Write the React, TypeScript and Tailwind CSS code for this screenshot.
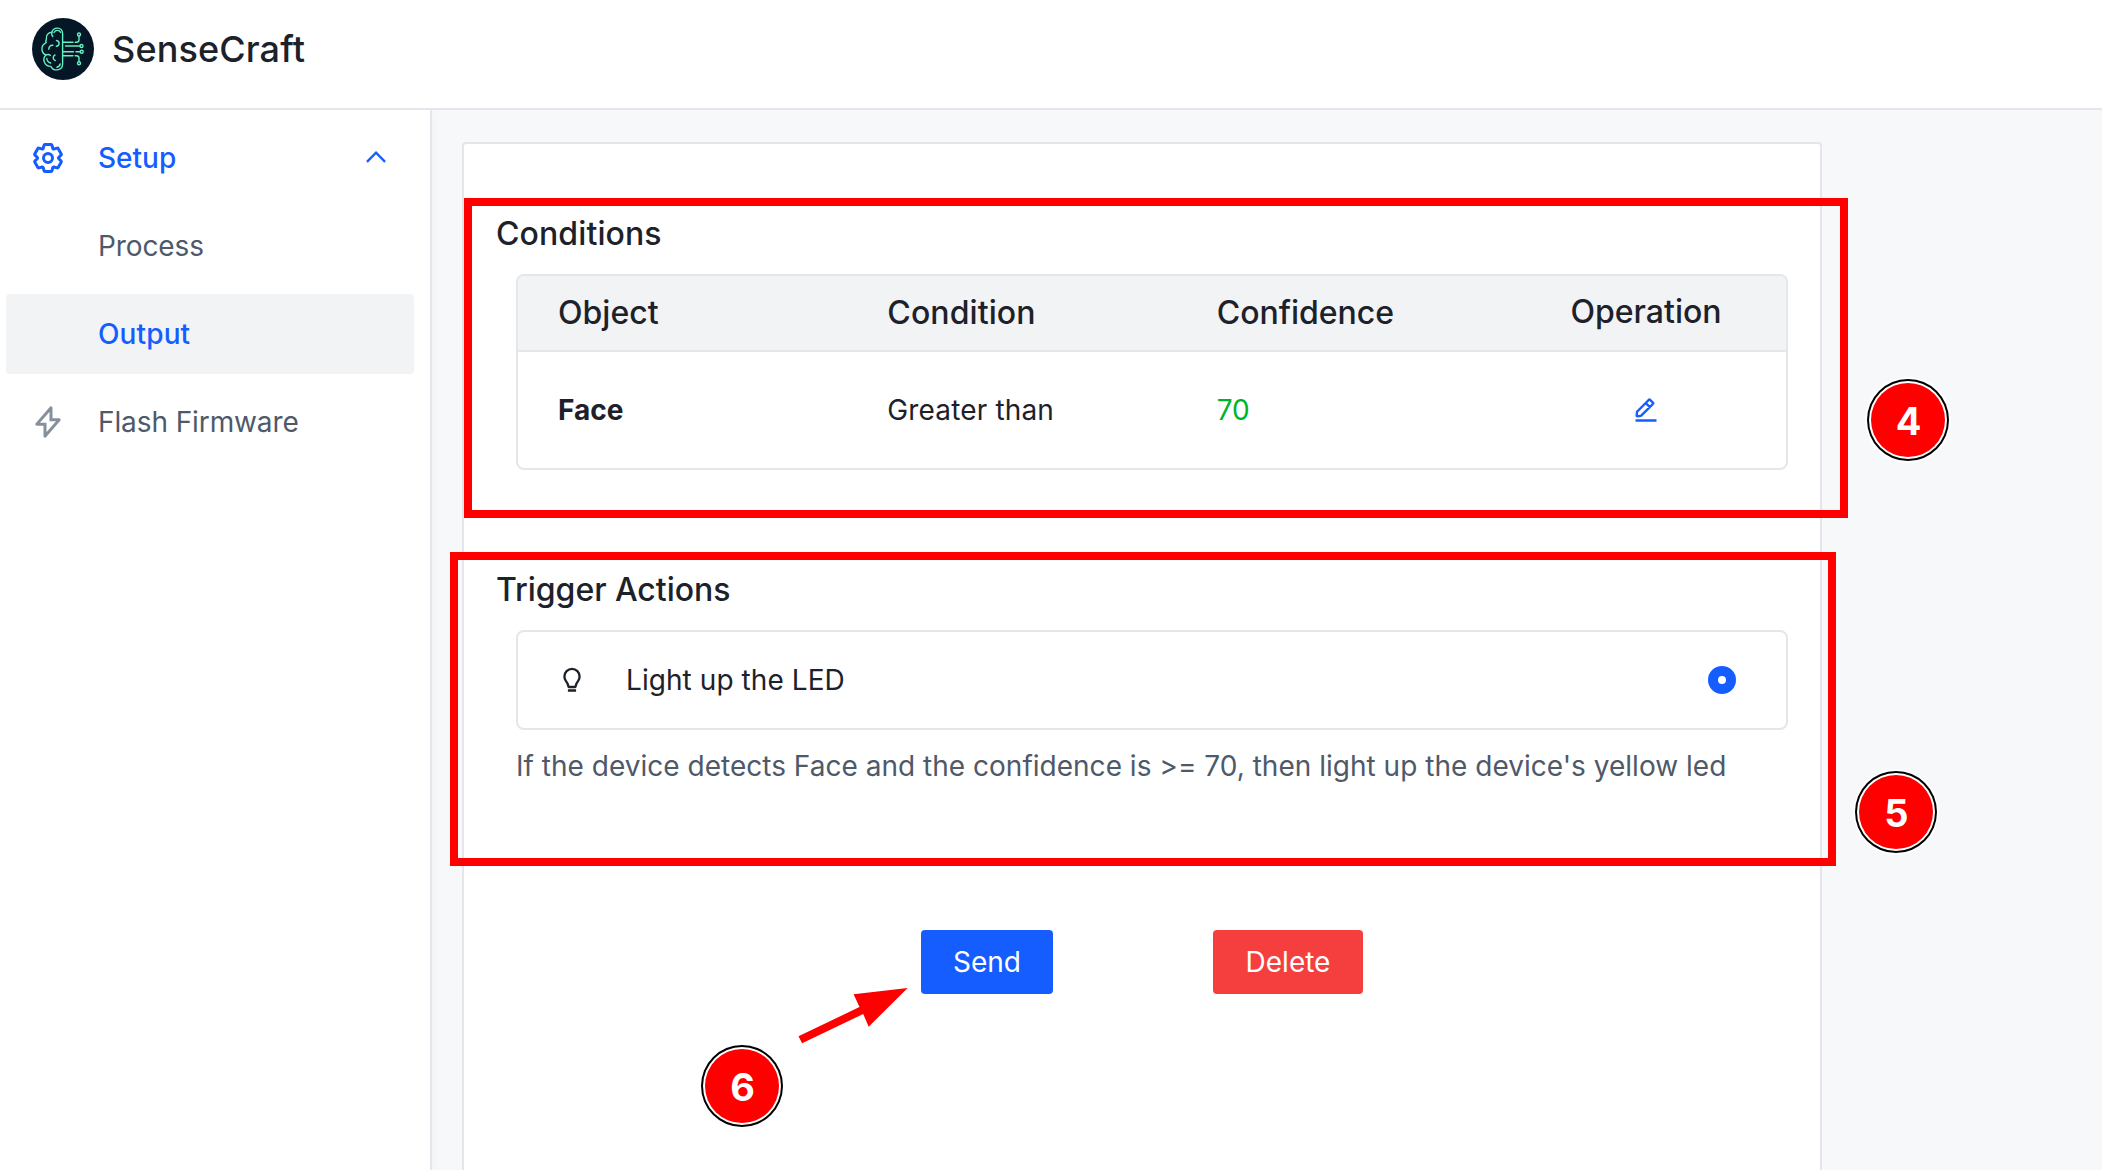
import type { ReactNode } from "react";

function Logo() {
  return (
    <svg className="size-[62px] shrink-0" viewBox="0 0 62 62" fill="none" stroke="#64f0c0" strokeWidth="1.4" strokeLinecap="round" strokeLinejoin="round">
      <circle cx="31" cy="31" r="31" fill="#051726" stroke="none" />
      <path d="M30.6 15.5c0-3.4-2.4-5.4-5.2-5.4-2.9 0-5 1.7-5.6 4.2-3.8.2-6 3-5.4 6.8-1 1.6-.6 2.6-.2 3.6-3 1.4-4.6 4-4.2 7 .3 2.7 1.8 4.5 4 5.3-2 1.8-2.6 4-1.9 6.4.9 3 3.500 5 6.900 5 .9 2.200 3.200 3.600 6 3.500 3.200-.1 5.600-2.400 5.600-5.600z" />
      <path d="M19.8 14.3c-.3 1.500 0 3 1 4.200M22 14.500c.8-1.500 2-2.200 3.400-2.100 1.500 0 2.700.8 3.200 2M24.500 22.500c1.700.2 2.700 1.500 2.600 3-.1 1.600-1.200 2.700-2.800 2.800M20.800 27.300c-2.300-.3-4.100 1.400-4 4M14 37c1.500-.8 3.200-.6 4.400.3M23 37c-1.600.8-2.200 2.600-1.400 4.200.4.700 1 1.200 1.700 1.400M14.800 40.500c.2 2.200 1.600 3.900 3.800 4.500M28.200 46c-.4 1.800-1.600 3-3.300 3.200" />
      <path d="M31 24.300h10M43.200 24.300h1.300c1.700 0 2.500-.8 2.500-2.500v-3.500M33.500 28h14M31 33.700h10.500M44 33.700h4M31 37.700h10M43.200 37.700h1.300c1.700 0 2.500.8 2.500 2.500v3" />
      <circle cx="47" cy="16.5" r="1.5" />
      <circle cx="49.5" cy="28" r="1.5" />
      <circle cx="49.7" cy="33.7" r="1.5" />
      <circle cx="47" cy="45.2" r="1.5" />
    </svg>
  );
}

function Icon({ className, children }: { className: string; children: ReactNode }) {
  return (
    <svg className={className} viewBox="0 0 48 48" fill="none" stroke="currentColor" strokeWidth="4">
      {children}
    </svg>
  );
}

const GearIcon = () => (
  <Icon className="size-9">
    <path d="M18.797 6.732A1 1 0 0 1 19.760 6h8.480a1 1 0 0 1 .964.732l1.285 4.628a1 1 0 0 0 1.213.7l4.651-1.200a1 1 0 0 1 1.116.468l4.240 7.344a1 1 0 0 1-.153 1.200L38.193 23.300a1 1 0 0 0 0 1.402l3.364 3.427a1 1 0 0 1 .153 1.200l-4.240 7.344a1 1 0 0 1-1.116.468l-4.650-1.200a1 1 0 0 0-1.214.7l-1.285 4.628a1 1 0 0 1-.964.732h-8.480a1 1 0 0 1-.963-.732L17.510 36.640a1 1 0 0 0-1.213-.7l-4.650 1.200a1 1 0 0 1-1.116-.468l-4.240-7.344a1 1 0 0 1 .153-1.200L9.809 24.700a1 1 0 0 0 0-1.402l-3.364-3.427a1 1 0 0 1-.153-1.200l4.240-7.344a1 1 0 0 1 1.116-.468l4.650 1.200a1 1 0 0 0 1.213-.7l1.286-4.628Z" />
    <path d="M30 24a6 6 0 1 1-12 0 6 6 0 0 1 12 0Z" />
  </Icon>
);

const BoltIcon = () => (
  <Icon className="size-9 text-[#86909c]">
    <path d="M27.824 5.203A.1.1 0 0 1 28 5.270V21h10.782a.1.1 0 0 1 .075.165L20.176 42.797A.1.1 0 0 1 20 42.730V27H9.219a.1.1 0 0 1-.076-.165L27.824 5.203Z" />
  </Icon>
);

function MenuItem({ label, icon, trailing, active, color }: { label: string; icon?: ReactNode; trailing?: ReactNode; active?: boolean; color: string }) {
  return (
    <div className={`flex h-20 items-center rounded px-6 ${active ? "bg-[#f2f3f5]" : ""} ${color}`}>
      <span className="w-[68px] shrink-0">{icon}</span>
      <span className="flex-1">{label}</span>
      {trailing}
    </div>
  );
}

function Badge({ n, className }: { n: number; className: string }) {
  return (
    <div className={`absolute flex size-[86px] items-center justify-center rounded-full bg-white ${className}`}>
      <div className="flex size-[82px] items-center justify-center rounded-full bg-black">
        <div className="flex size-[78px] items-center justify-center rounded-full bg-white">
          <div className="flex size-[74px] items-center justify-center rounded-full bg-[#ff0000] pt-px pl-px text-[38px] leading-none font-bold text-white">{n}</div>
        </div>
      </div>
    </div>
  );
}

export default function App() {
  return (
    <div className="relative flex h-[1170px] w-[2102px] flex-col overflow-hidden bg-white font-['Inter',sans-serif] text-[28px] leading-[44px] text-[#1d2129]">
      <header className="flex h-[110px] shrink-0 items-start border-b-2 border-[#e5e6eb] pt-[18px] pl-8">
        <Logo />
        <h1 className="ml-[18px] pt-[3px] text-[36px] leading-[56px] font-medium tracking-[0.12px]">SenseCraft</h1>
      </header>

      <div className="flex min-h-0 flex-1">
        <aside className="z-10 flex w-[432px] shrink-0 flex-col gap-2 border-r-2 border-[#e5e6eb] bg-white py-2 pr-4 pl-1.5 shadow-[0_4px_10px_rgba(0,0,0,0.04)] [clip-path:inset(0_-30px_0_0)]">
          <MenuItem
            label="Setup"
            color="text-[#165dff] font-medium"
            icon={<GearIcon />}
            trailing={
              <Icon className="size-7">
                <path d="M39.600 30.557 24.043 15 8.487 30.557" />
              </Icon>
            }
          />
          <MenuItem label="Process" color="text-[#4e5969] tracking-[-0.1px]" />
          <MenuItem label="Output" color="text-[#165dff] font-medium tracking-[0.12px]" active />
          <MenuItem label="Flash Firmware" color="text-[#4e5969] tracking-[-0.1px]" icon={<BoltIcon />} />
        </aside>

        <main className="flex-1 bg-[#f7f8fa] pt-8 pl-[30px]">
          <section className="h-[1100px] w-[1360px] rounded border-2 border-[#e5e6eb] bg-white px-8 pt-[66px]">
            <h2 className="h-16 text-[32px] leading-[48px] font-medium tracking-[0.1px]">Conditions</h2>
            <div className="ml-5 w-[1272px] overflow-hidden rounded-lg border-2 border-[#e5e6eb]">
              <div className="grid h-[76px] grid-cols-[329.33px_329.33px_329.33px_1fr] items-center border-b-2 border-[#e5e6eb] bg-[#f2f3f5] text-[32px] font-medium">
                <span className="pl-10">Object</span>
                <span className="pl-10 tracking-[0.1px]">Condition</span>
                <span className="pl-10">Confidence</span>
                <span className="pb-0.5 text-center">Operation</span>
              </div>
              <div className="grid h-[116px] grid-cols-[329.33px_329.33px_329.33px_1fr] items-center">
                <span className="pl-10 font-bold">Face</span>
                <span className="pl-10 tracking-[0.15px]">Greater than</span>
                <span className="pl-10 text-[#00b42a]">70</span>
                <span className="flex justify-center text-[#165dff]">
                  <Icon className="size-7">
                    <path d="m30.480 19.038 5.733-5.734a1 1 0 0 0 0-1.414l-5.586-5.586a1 1 0 0 0-1.414 0l-5.734 5.734m7 7L15.763 33.754a1 1 0 0 1-.590.286l-6.048.708a1 1 0 0 1-1.113-1.069l.477-6.310a1 1 0 0 1 .290-.631l14.700-14.700m7 7-7-7M6 42h36" />
                  </Icon>
                </span>
              </div>
            </div>

            <h2 className="mt-24 h-16 text-[32px] leading-[48px] font-medium tracking-[-0.04px]">Trigger Actions</h2>
            <div className="ml-5 flex h-[100px] w-[1272px] items-center rounded-lg border-2 border-[#e5e6eb] pr-[50px] pl-10">
              <Icon className="size-7">
                <path d="M17 42h14m6-24c0 2.823-.9 5.437-2.430 7.568-1.539 2.147-3.185 4.320-3.770 6.897l-.623 2.756A1 1 0 0 1 29.200 36H18.800a1 1 0 0 1-.976-.779l-.624-2.756c-.584-2.576-2.230-4.750-3.770-6.897A12.940 12.940 0 0 1 11 18c0-7.180 5.820-13 13-13s13 5.820 13 13Z" />
              </Icon>
              <span className="ml-10 flex-1 tracking-[0.07px]">Light up the LED</span>
              <span className="size-7 rounded-full border-[10px] border-[#165dff] bg-white" />
            </div>
            <p className="mt-[14px] ml-5 whitespace-nowrap tracking-[0.015px] text-[#4e5969]">If the device detects Face and the confidence is &gt;= 70, then light up the device's yellow led</p>

            <div className="mt-[142px] ml-[425px] flex gap-40">
              <button className="h-16 w-[132px] rounded bg-[#165dff] text-white">Send</button>
              <button className="h-16 w-[150px] rounded bg-[#f53f3f] text-white">Delete</button>
            </div>
          </section>
        </main>
      </div>

      <div className="absolute top-[198px] left-[464px] z-20 h-[320px] w-[1384px] border-8 border-[#ff0000]" />
      <div className="absolute top-[552px] left-[450px] z-20 h-[314px] w-[1386px] border-8 border-[#ff0000]" />
      <Badge n={4} className="top-[377px] left-[1865px]" />
      <Badge n={5} className="top-[769px] left-[1853px]" />
      <Badge n={6} className="top-[1043px] left-[699px]" />
      <svg className="absolute top-[980px] left-[790px] h-[70px] w-[125px]" viewBox="790 980 125 70" fill="#ff0000">
        <path d="M907.700 988 853.600 994.300 859.500 1007 798.500 1036.300 802.100 1043.300 863.200 1014 868.700 1026.700Z" />
      </svg>
    </div>
  );
}
